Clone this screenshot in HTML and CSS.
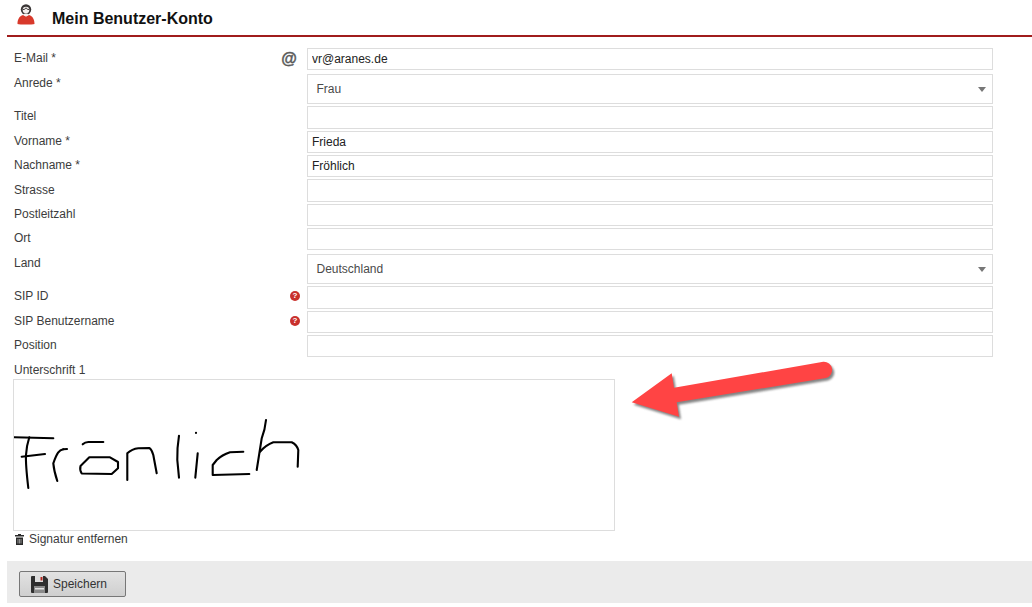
FILE: index.html
```html
<!DOCTYPE html>
<html lang="de">
<head>
<meta charset="utf-8">
<title>Mein Benutzer-Konto</title>
<link rel="stylesheet" href="styles.css">
</head>
<body>
<header class="head">
  <svg class="head-icon" width="18" height="21" viewBox="0 0 18 21">
    <path d="M.5 20c0-4.500 1.800-8 5.500-9l3 1.500 3-1.500c3.700 1 5.500 4.500 5.500 9-2 .8-15 .8-17 0z" fill="#d8392b"/>
    <circle cx="9" cy="5.500" r="5.200" fill="#3a3636"/>
    <circle cx="9" cy="6" r="3.300" fill="#f4f0ee"/>
    <path d="M6 5.500c1.500 0 2.500-.5 3-1.700.5 1.200 1.500 1.700 3 1.700" stroke="#3a3636" fill="none"/>
    <path d="M6.500 11l2.500 1.500 2.500-1.500-1-1.500h-3z" fill="#f4f0ee"/>
  </svg>
  <h1 class="title">Mein Benutzer-Konto</h1>
</header>
<form class="form">
  <div class="row">
    <label class="lbl">E-Mail *</label>
    <span class="hint hint-at">@</span>
    <input class="field" type="text" value="vr@aranes.de">
  </div>
  <div class="row">
    <label class="lbl lbl-low">Anrede *</label>
    <div class="field pick"><span>Frau</span><i class="caret"></i></div>
  </div>
  <div class="row"><label class="lbl">Titel</label><input class="field" type="text"></div>
  <div class="row"><label class="lbl">Vorname *</label><input class="field" type="text" value="Frieda"></div>
  <div class="row"><label class="lbl">Nachname *</label><input class="field" type="text" value="Fröhlich"></div>
  <div class="row"><label class="lbl lbl-low">Strasse</label><input class="field" type="text"></div>
  <div class="row"><label class="lbl">Postleitzahl</label><input class="field" type="text"></div>
  <div class="row"><label class="lbl">Ort</label><input class="field" type="text"></div>
  <div class="row">
    <label class="lbl lbl-low">Land</label>
    <div class="field pick"><span>Deutschland</span><i class="caret"></i></div>
  </div>
  <div class="row">
    <label class="lbl">SIP ID</label>
    <span class="hint"><b class="help">?</b></span>
    <input class="field" type="text">
  </div>
  <div class="row">
    <label class="lbl">SIP Benutzername</label>
    <span class="hint"><b class="help">?</b></span>
    <input class="field" type="text">
  </div>
  <div class="row"><label class="lbl">Position</label><input class="field" type="text"></div>
  <div class="sig-label">Unterschrift 1</div>
  <div class="sig-box">
    <svg class="sig" width="600" height="150" viewBox="14 380 600 150" fill="none" stroke="#000" stroke-width="2.100" stroke-linecap="round" stroke-linejoin="round">
      <path d="M14.500 437.300L53.300 438.300"/>
      <path d="M29.300 437.300Q26.500 446 26 455T28.300 488"/>
      <path d="M21.700 456.700L45 454"/>
      <path d="M63.300 449.300C59 450 57 453 53.300 463.300Q54 471 57.300 481"/>
      <path d="M63.300 449.300L67 449"/>
      <path d="M82.700 444.300Q85 442 88.300 442L103.300 442"/>
      <path d="M89.300 457.300L80.500 466Q79.500 470 81.700 473.500L111.700 474L118 468.300V462L110 457.300z"/>
      <path d="M127.300 480V453.300Q132 449 138.300 448.300L149.500 448Q152 450 153.300 455L156.700 473.300"/>
      <path d="M179 435.700Q177 448 177.300 460L179 477.700"/>
      <path d="M196 432.700V433"/>
      <path d="M197.700 453.300L195.300 477.700"/>
      <path d="M243.300 451.700L230 452.300Q222 455 216.700 460L212.700 465V475L249.300 474"/>
      <path d="M266 420Q265 430 261.700 438.300L256.700 470"/>
      <path d="M260 451.700Q266 445 273.300 442.300H291.700Q297 445 298.300 450L297.700 466.700"/>
    </svg>
  </div>
  <a class="remove">
    <svg width="9" height="11" viewBox="0 0 9 11"><path d="M3 0h3v1h3v1.500H0V1h3zM1 3.500h7V11H1z" fill="#2a2a2a"/><path d="M3 5v4.500M4.500 5v4.500M6 5v4.500" stroke="#ddd" stroke-width=".6"/></svg>
    <span>Signatur entfernen</span>
  </a>
  <footer class="bar">
    <button class="save" type="button">
      <svg width="17" height="17" viewBox="0 0 17 17"><path d="M1 0h13l3 3v13a1 1 0 0 1-1 1H1a1 1 0 0 1-1-1V1a1 1 0 0 1 1-1z" fill="#2e2e2e"/><path d="M4 0h8v6H4z" fill="#ddd"/><path d="M9.500 1h2v3.500h-2z" fill="#b3261e"/><path d="M3 10h11v7H3z" fill="#8a8a8a"/><path d="M4 12h9v1.500H4z" fill="#e4e4e4"/></svg>
      <span>Speichern</span>
    </button>
  </footer>
</form>
<svg class="arrow" width="220" height="75" viewBox="620 352 220 75">
  <path class="arrow-shade" d="M633.700 404.800L673.700 375.800L676 390.200L825.300 364.200A8.300 8.300 0 0 1 828 380.500L678.700 404.800L681 419.200z"/>
  <path d="M631.700 402.300L671.700 373.300L674 387.700L823.300 361.700A8.300 8.300 0 0 1 826 378L676.700 402.300L679 416.700z" fill="#ff4444"/>
</svg>
</body>
</html>
```
FILE: styles.css
```css
* { box-sizing: border-box; }
html, body { margin: 0; padding: 0; background: #fff; }
body {
  position: relative;
  width: 1032px;
  height: 607px;
  overflow: hidden;
  font-family: "Liberation Sans", Arial, sans-serif;
  font-size: 12px;
  color: #3c3c3c;
}
.head {
  display: flex;
  align-items: center;
  height: 37px;
  margin-left: 7px;
  padding: 2px 0 0 10px;
  border-bottom: 2px solid #a01c1c;
}
.head-icon { margin-top: -9px; }
.title {
  margin: 0 0 0 17px;
  font-size: 16px;
  font-weight: bold;
  color: #111;
}
.form { padding: 11px 0 0 13px; }
.row {
  display: flex;
  align-items: flex-start;
  position: relative;
  margin-bottom: 2px;
  padding-left: 294px;
  width: 980px;
}
.lbl {
  position: absolute;
  left: 1px;
  top: 2px;
  line-height: 16px;
}
.lbl-low { top: 3px; }
.field {
  display: block;
  width: 686px;
  height: 22.330px;
  margin: 0;
  padding: 0 4px;
  border: 1px solid #ddd;
  border-radius: 0;
  outline: 0;
  background: #fff;
  font: 12px "Liberation Sans", Arial, sans-serif;
  color: #222;
}
.pick {
  position: relative;
  display: flex;
  align-items: center;
  height: 30.330px;
  margin-top: 1.670px;
  padding-left: 8.500px;
  color: #4a4a4a;
}
.caret {
  position: absolute;
  right: 6px;
  top: 12px;
  border: 4px solid transparent;
  border-top: 5px solid #777;
  border-bottom: 0;
}
.hint {
  position: absolute;
  right: 690px;
  top: 0;
  width: 16px;
  height: 20px;
  display: flex;
  align-items: center;
  justify-content: center;
}
.hint-at {
  right: 696px;
  height: 22px;
  font-size: 16px;
  font-weight: bold;
  color: #5a5a5a;
  -webkit-text-stroke: .4px #5a5a5a;
}
.help {
  display: block;
  width: 10px;
  height: 10px;
  border-radius: 50%;
  background: #c9302c;
  color: #fff;
  font-size: 8px;
  line-height: 10px;
  text-align: center;
}
.sig-label { margin: 4px 0 0 1px; height: 18px; line-height: 18px; }
.sig-box {
  width: 602px;
  height: 152px;
  border: 1px solid #ddd;
  background: #fff;
}
.sig { display: block; }
.remove {
  display: flex;
  align-items: center;
  gap: 5px;
  height: 16px;
  padding: 0 0 0 2px;
  color: #3c3c3c;
}
.bar {
  display: flex;
  width: 1025px;
  height: 42px;
  margin: 14px 0 0 -6px;
  padding: 10px 0 0 12px;
  background: #ebebeb;
}
.save {
  display: flex;
  align-items: center;
  gap: 5px;
  width: 107px;
  height: 26px;
  margin: 0;
  padding: 0 0 0 11px;
  border: 1px solid #777;
  border-radius: 2px;
  background: linear-gradient(#e2e2e2, #cfcfcf);
  font: 12px "Liberation Sans", Arial, sans-serif;
  color: #333;
}
.arrow { position: absolute; left: 620px; top: 352px; }
.arrow-shade { fill: #666; opacity: .8; filter: blur(1px); }
```
